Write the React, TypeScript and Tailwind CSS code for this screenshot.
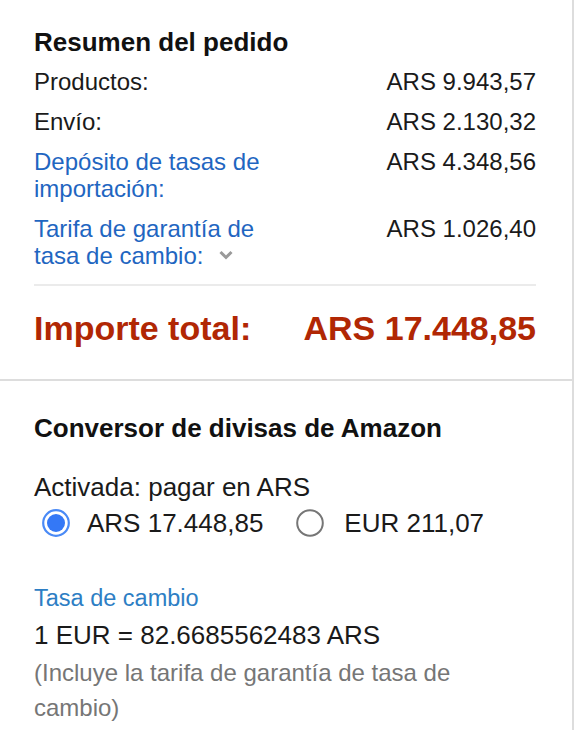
import React from "react";

const font = { fontFamily: '"Liberation Sans", Arial, Helvetica, sans-serif' };

function Row({
  label,
  value,
  link,
  chevron,
}: {
  label: React.ReactNode;
  value: string;
  link?: boolean;
  chevron?: boolean;
}) {
  return (
    <div className="flex justify-between items-start text-[24px] leading-[27px]">
      <div className={`w-[250px] ${link ? "text-[#1f66c1]" : "text-[#1a1a1a]"}`}>
        {label}
        {chevron && (
          <svg
            className="inline-block ml-[16px] align-middle -mt-[6px]"
            width="14"
            height="10"
            viewBox="0 0 14 10"
          >
            <path
              d="M1.5 2 L7 7.5 L12.5 2"
              fill="none"
              stroke="#9a9a9a"
              strokeWidth="3"
              strokeLinejoin="miter"
            />
          </svg>
        )}
      </div>
      <div className="text-right text-[#1a1a1a]">{value}</div>
    </div>
  );
}

function Radio({ checked }: { checked?: boolean }) {
  return (
    <svg width="28" height="28" viewBox="0 0 28 28" className="shrink-0">
      {checked ? (
        <>
          <circle cx="14" cy="14" r="12.8" fill="#fff" stroke="#4a8af6" strokeWidth="2.2" />
          <circle cx="14" cy="14" r="9" fill="#3478f6" />
        </>
      ) : (
        <circle cx="14" cy="14" r="12.8" fill="#fff" stroke="#767676" strokeWidth="2" />
      )}
    </svg>
  );
}

export default function App() {
  return (
    <div className="bg-white w-[574px] min-h-[730px] border-r-[2px] border-[#dddddd]" style={font}>
      <section className="pl-[34px] pr-[36px] pt-[26px] pb-[31px]">
        <h2 className="text-[26px] leading-[32px] font-bold text-[#111111]">Resumen del pedido</h2>
        <div className="mt-[10px] flex flex-col gap-[13px]">
          <Row label="Productos:" value="ARS 9.943,57" />
          <Row label="Envío:" value="ARS 2.130,32" />
          <Row label="Depósito de tasas de importación:" value="ARS 4.348,56" link />
          <Row label="Tarifa de garantía de tasa de cambio:" value="ARS 1.026,40" link chevron />
        </div>
        <div className="mt-[15px] h-[2px] bg-[#ebebeb]" />
        <div className="mt-[22px] flex justify-between items-center text-[34px] leading-[40px] font-bold text-[#b12704]">
          <span>Importe total:</span>
          <span>ARS 17.448,85</span>
        </div>
      </section>
      <div className="h-[2px] bg-[#dddddd]" />
      <section className="pl-[34px] pr-[36px] pt-[31px] pb-[10px]">
        <h2 className="text-[26px] leading-[32px] font-bold text-[#111111]">Conversor de divisas de Amazon</h2>
        <div className="mt-[28px] text-[26px] leading-[30px] text-[#1a1a1a]">Activada: pagar en ARS</div>
        <div className="mt-[3px] h-[36px] flex items-center text-[26px] text-[#1a1a1a]">
          <label className="ml-[8px] flex items-center gap-[17px]">
            <Radio checked />
            <span>ARS 17.448,85</span>
          </label>
          <label className="ml-[33px] flex items-center gap-[20px]">
            <Radio />
            <span>EUR 211,07</span>
          </label>
        </div>
        <div className="mt-[42px] text-[23.5px] leading-[30px] text-[#2d7ec4]">Tasa de cambio</div>
        <div className="mt-[4px] text-[26px] leading-[36px] text-[#1a1a1a]">1 EUR = 82.6685562483 ARS</div>
        <div className="mt-[2px] w-[430px] text-[24px] leading-[35px] text-[#767676]">
          (Incluye la tarifa de garantía de tasa de cambio)
        </div>
      </section>
    </div>
  );
}
